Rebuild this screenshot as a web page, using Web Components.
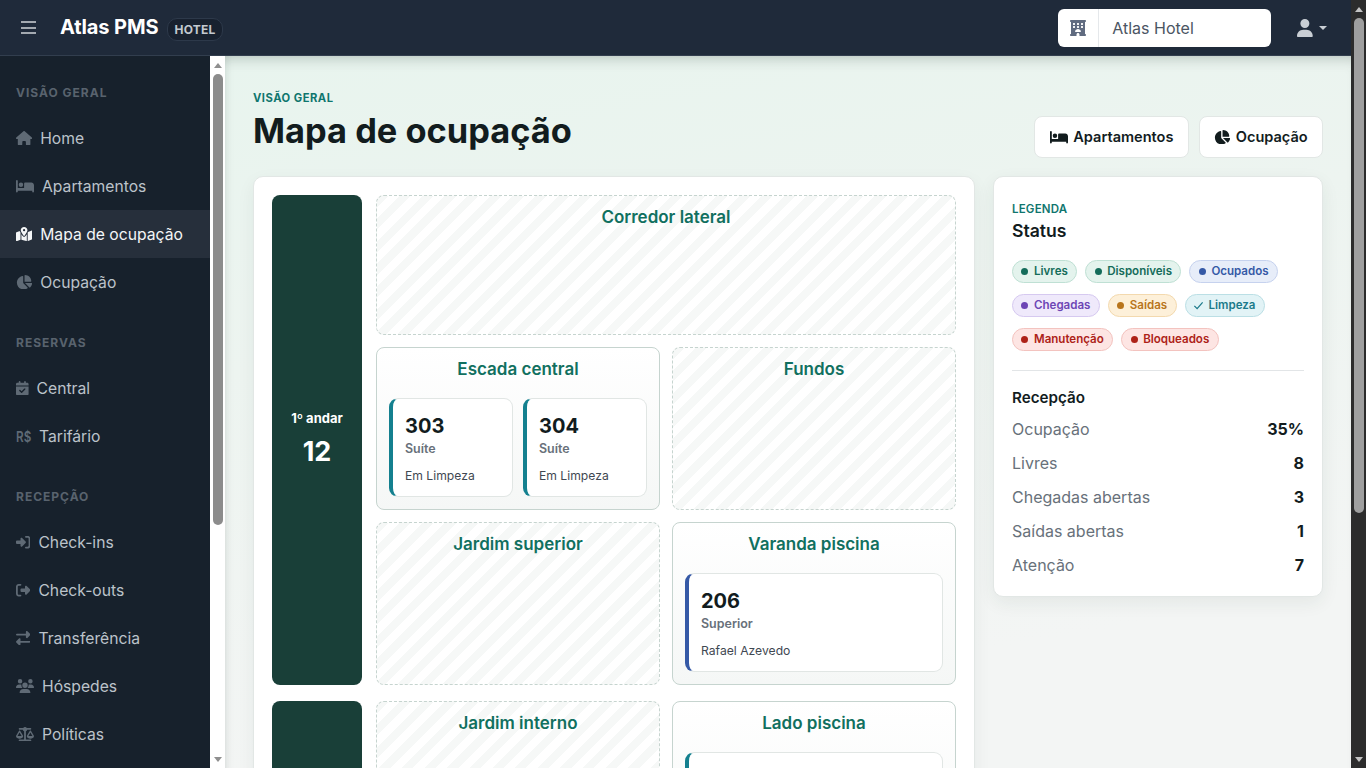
<!DOCTYPE html>
<html lang="pt-BR">
<head>
<meta charset="utf-8">
<title>Mapa de ocupação</title>
<style>
  html, body { margin: 0; height: 100%; overflow: hidden; }
  body { display: flex; font-family: Inter, "Liberation Sans", sans-serif; background: #f3f5f4; color: #121c1e; }
</style>
</head>
<body>
<atlas-app></atlas-app>
<fake-scrollbar theme="dark" thumb="495"></fake-scrollbar>

<template id="tpl-app">
  <style>
    :host { display: flex; flex-direction: column; flex: 1; min-width: 0; height: 768px; overflow: hidden; }
    .below { display: flex; flex: 1; min-height: 0; }
    main { flex: 1; min-width: 0; overflow: hidden; padding: 34px 28px 0;
      background: linear-gradient(170deg, #e8f4ee 0%, #edf4f0 35%, #f3f5f4 80%);
      box-shadow: inset 0 12px 14px -10px rgba(40,60,55,.28), inset 10px 0 10px -10px rgba(40,60,55,.14); }
    .columns { display: flex; gap: 18px; align-items: flex-start; margin-top: 18px; }
    .map-card { flex: 1; min-width: 0; padding: 18px; background: #fff; border: 1px solid #e2e7e5; border-radius: 10px; box-shadow: 0 6px 18px rgba(30,50,45,.06); }
  </style>
  <atlas-topbar></atlas-topbar>
  <div class="below">
    <atlas-sidebar></atlas-sidebar>
    <fake-scrollbar thumb="451"></fake-scrollbar>
    <main>
      <page-header></page-header>
      <div class="columns">
        <div class="map-card">
          <floor-block label="1º andar" count="12">
            <zone-box wide empty name="Corredor lateral"></zone-box>
            <zone-box name="Escada central">
              <room-card number="303" kind="Suíte" note="Em Limpeza" tone="#14808f"></room-card>
              <room-card number="304" kind="Suíte" note="Em Limpeza" tone="#14808f"></room-card>
            </zone-box>
            <zone-box empty name="Fundos"></zone-box>
            <zone-box empty name="Jardim superior"></zone-box>
            <zone-box name="Varanda piscina">
              <room-card number="206" kind="Superior" note="Rafael Azevedo" tone="#3559a6"></room-card>
            </zone-box>
          </floor-block>
          <floor-block>
            <zone-box empty name="Jardim interno"></zone-box>
            <zone-box name="Lado piscina">
              <room-card tone="#14808f"></room-card>
            </zone-box>
          </floor-block>
        </div>
        <legend-panel></legend-panel>
      </div>
    </main>
  </div>
</template>

<script>
const ICONS = {
  home: [576, 'M575.8 255.5c0 18-15 32.1-32 32.1h-32l.7 160.2c0 2.7-.2 5.4-.5 8.1V472c0 22.1-17.9 40-40 40H456c-1.1 0-2.2 0-3.3-.1c-1.4 .1-2.8 .1-4.2 .1H416 392c-22.1 0-40-17.9-40-40V448 384c0-17.7-14.3-32-32-32H256c-17.7 0-32 14.3-32 32v64 24c0 22.1-17.9 40-40 40H160 128.1c-1.5 0-3-.1-4.5-.2c-1.2 .1-2.4 .2-3.6 .2H104c-22.1 0-40-17.9-40-40V360c0-.9 0-1.9 .1-2.8V287.6H32c-18 0-32-14-32-32.1c0-9 3-17 10-24L266.4 8c7-7 15-8 22-8s15 2 21 7L564.8 231.5c8 7 12 15 11 24z'],
  bed: [640, 'M32 32c17.7 0 32 14.3 32 32V320H288V160c0-17.7 14.3-32 32-32H544c53 0 96 43 96 96V448c0 17.7-14.3 32-32 32s-32-14.3-32-32V416H352 320 64v32c0 17.7-14.3 32-32 32s-32-14.3-32-32V64C0 46.3 14.3 32 32 32zm144 96a80 80 0 1 1 0 160 80 80 0 1 1 0-160z'],
  pie: [576, 'M304 240V16.6c0-9 7-16.6 16-16.6C443.7 0 544 100.3 544 224c0 9-7.6 16-16.6 16H304zM32 272C32 150.7 122.1 50.3 239 34.3c9.2-1.3 17 6.1 17 15.4V288L412.5 444.5c6.7 6.7 6.2 17.7-1.5 23.1C371.8 495.6 323.8 512 272 512C139.5 512 32 404.6 32 272zm526.4 16c9.3 0 16.6 7.8 15.4 17c-7.7 55.9-34.6 105.6-73.9 142.3c-6 5.6-15.4 5.2-21.2-.7L320 288H558.4z'],
  map: [576, 'M408 120c0 54.6-73.1 151.9-105.2 192c-7.7 9.6-22 9.6-29.6 0C241.1 271.9 168 174.6 168 120C168 53.7 221.7 0 288 0s120 53.7 120 120zm8 80.4c3.5-6.9 6.7-13.8 9.6-20.6c.5-1.2 1-2.5 1.5-3.7l116-46.4C558.9 123.4 576 135 576 152V422.8c0 9.8-6 18.6-15.1 22.3L416 503V200.4zM137.6 138.3c2.4 14.1 7.2 28.3 12.8 41.5c2.9 6.8 6.1 13.7 9.6 20.6V451.8L32.9 502.7C17.1 509 0 497.4 0 480.4V209.6c0-9.8 6-18.6 15.1-22.3l122.6-49zM327.8 332c13.9-17.4 35.7-45.7 56.2-77V504.3L192 449.4V255c20.5 31.3 42.3 59.6 56.2 77c20.5 25.6 59.1 25.6 79.6 0zM288 152a40 40 0 1 0 0-80 40 40 0 1 0 0 80z'],
  calendar: [448, 'M128 0c17.7 0 32 14.3 32 32V64H288V32c0-17.7 14.3-32 32-32s32 14.3 32 32V64h48c26.5 0 48 21.5 48 48v48H0V112C0 85.5 21.5 64 48 64H96V32c0-17.7 14.3-32 32-32zM0 192H448V464c0 26.5-21.5 48-48 48H48c-26.5 0-48-21.5-48-48V192zM329 305c9.4-9.4 9.4-24.6 0-33.9s-24.6-9.4-33.9 0l-95 95-47-47c-9.4-9.4-24.6-9.4-33.9 0s-9.4 24.6 0 33.9l64 64c9.4 9.4 24.6 9.4 33.9 0L329 305z'],
  signin: [512, 'M217.9 105.9L340.7 228.7c7.2 7.2 11.3 17.1 11.3 27.3s-4.1 20.1-11.3 27.3L217.9 406.1c-6.4 6.4-15 9.9-24 9.9c-18.7 0-33.9-15.2-33.9-33.9l0-62.1L32 320c-17.7 0-32-14.3-32-32l0-64c0-17.7 14.3-32 32-32l128 0 0-62.1c0-18.7 15.2-33.9 33.9-33.9c9 0 17.6 3.6 24 9.9zM352 416l64 0c17.7 0 32-14.3 32-32l0-256c0-17.7-14.3-32-32-32l-64 0c-17.7 0-32-14.3-32-32s14.3-32 32-32l64 0c53 0 96 43 96 96l0 256c0 53-43 96-96 96l-64 0c-17.7 0-32-14.3-32-32s14.3-32 32-32z'],
  signout: [512, 'M377.9 105.9L500.7 228.7c7.2 7.2 11.3 17.1 11.3 27.3s-4.1 20.1-11.3 27.3L377.9 406.1c-6.4 6.4-15 9.9-24 9.9c-18.7 0-33.9-15.2-33.9-33.9l0-62.1-128 0c-17.7 0-32-14.3-32-32l0-64c0-17.7 14.3-32 32-32l128 0 0-62.1c0-18.7 15.2-33.9 33.9-33.9c9 0 17.6 3.6 24 9.9zM160 96L96 96c-17.7 0-32 14.3-32 32l0 256c0 17.7 14.3 32 32 32l64 0c17.7 0 32 14.3 32 32s-14.3 32-32 32l-64 0c-53 0-96-43-96-96L0 128C0 75 43 32 96 32l64 0c17.7 0 32 14.3 32 32s-14.3 32-32 32z'],
  exchange: [512, 'M32 96l320 0V32c0-12.9 7.8-24.6 19.8-29.6s25.7-2.2 34.9 6.9l96 96c6 6 9.4 14.1 9.4 22.6s-3.4 16.6-9.4 22.6l-96 96c-9.2 9.2-22.9 11.9-34.9 6.9s-19.8-16.6-19.8-29.6V160L32 160c-17.7 0-32-14.3-32-32s14.3-32 32-32zM480 352c17.7 0 32 14.3 32 32s-14.3 32-32 32H160v64c0 12.9-7.8 24.6-19.8 29.6s-25.7 2.2-34.9-6.9l-96-96c-6-6-9.4-14.1-9.4-22.6s3.4-16.6 9.4-22.6l96-96c9.2-9.2 22.9-11.9 34.9-6.9s19.8 16.6 19.8 29.6l0 64H480z'],
  users: [640, 'M144 0a80 80 0 1 1 0 160A80 80 0 1 1 144 0zM512 0a80 80 0 1 1 0 160A80 80 0 1 1 512 0zM0 298.7C0 239.8 47.8 192 106.7 192h42.7c15.9 0 31 3.5 44.6 9.7c-1.3 7.2-1.9 14.7-1.9 22.3c0 38.2 16.8 72.5 43.3 96c-.2 0-.4 0-.7 0H21.3C9.6 320 0 310.4 0 298.7zM405.3 320c-.2 0-.4 0-.7 0c26.6-23.5 43.3-57.8 43.3-96c0-7.6-.7-15-1.9-22.3c13.6-6.3 28.7-9.7 44.6-9.7h42.7C592.2 192 640 239.8 640 298.7c0 11.8-9.6 21.3-21.3 21.3H405.3zM224 224a96 96 0 1 1 192 0 96 96 0 1 1 -192 0zM128 485.3C128 411.7 187.7 352 261.3 352H378.7C452.3 352 512 411.7 512 485.3c0 14.7-11.9 26.7-26.7 26.7H154.7c-14.7 0-26.7-11.9-26.7-26.7z'],
  scale: [640, 'M384 32H512c17.7 0 32 14.3 32 32s-14.3 32-32 32H398.4c-5.2 25.8-22.9 47.1-46.4 57.3V448H512c17.7 0 32 14.3 32 32s-14.3 32-32 32H320 128c-17.7 0-32-14.3-32-32s14.3-32 32-32H288V153.3c-23.5-10.3-41.2-31.6-46.4-57.3H128c-17.7 0-32-14.3-32-32s14.3-32 32-32H256c14.6-19.4 37.8-32 64-32s49.4 12.6 64 32zm55.6 288H584.4L512 195.8 439.6 320zM512 416c-62.9 0-115.2-34-126-78.9c-2.6-11 1-22.3 6.7-32.1l95.2-163.2c5-8.6 14.2-13.8 24.1-13.8s19.1 5.3 24.1 13.8l95.2 163.2c5.7 9.8 9.3 21.1 6.7 32.1C627.2 382 574.9 416 512 416zM126.8 195.8L54.4 320H199.3L126.8 195.8zM.9 337.1c-2.6-11 1-22.3 6.7-32.1l95.2-163.2c5-8.6 14.2-13.8 24.1-13.8s19.1 5.3 24.1 13.8l95.2 163.2c5.7 9.8 9.3 21.1 6.7 32.1C242 382 189.7 416 126.8 416S11.7 382 .9 337.1z'],
  hotel: [512, 'M0 32C0 14.3 14.3 0 32 0H480c17.7 0 32 14.3 32 32s-14.3 32-32 32V448c17.7 0 32 14.3 32 32s-14.3 32-32 32H304V464c0-26.5-21.5-48-48-48s-48 21.5-48 48v48H32c-17.7 0-32-14.3-32-32s14.3-32 32-32V64C14.3 64 0 49.7 0 32zm96 80v32c0 8.8 7.2 16 16 16h32c8.8 0 16-7.2 16-16V112c0-8.8-7.2-16-16-16H112c-8.8 0-16 7.2-16 16zM240 96c-8.8 0-16 7.2-16 16v32c0 8.8 7.2 16 16 16h32c8.8 0 16-7.2 16-16V112c0-8.8-7.2-16-16-16H240zm112 16v32c0 8.8 7.2 16 16 16h32c8.8 0 16-7.2 16-16V112c0-8.8-7.2-16-16-16H368c-8.8 0-16 7.2-16 16zM112 192c-8.8 0-16 7.2-16 16v32c0 8.8 7.2 16 16 16h32c8.8 0 16-7.2 16-16V208c0-8.8-7.2-16-16-16H112zm112 16v32c0 8.8 7.2 16 16 16h32c8.8 0 16-7.2 16-16V208c0-8.8-7.2-16-16-16H240c-8.8 0-16 7.2-16 16zm144-16c-8.8 0-16 7.2-16 16v32c0 8.8 7.2 16 16 16h32c8.8 0 16-7.2 16-16V208c0-8.8-7.2-16-16-16H368zM328 384c13.3 0 24.3-10.9 21-23.8c-10.6-41.5-48.2-72.2-93-72.2s-82.5 30.7-93 72.2c-3.3 12.8 7.8 23.8 21 23.8H328z'],
  user: [448, 'M224 256A128 128 0 1 0 224 0a128 128 0 1 0 0 256zm-45.7 48C79.8 304 0 383.8 0 482.3C0 498.7 13.3 512 29.7 512H418.3c16.4 0 29.7-13.3 29.7-29.7C448 383.8 368.2 304 269.7 304H178.3z'],
};

// same inline svg everywhere, width follows the glyph ratio
function iconSvg(name, size) {
  const [w, d] = ICONS[name];
  return `<svg width="${w / 512 * size}" height="${size}" viewBox="0 0 ${w} 512" fill="currentColor" style="display:block;flex:none"><path d="${d}"/></svg>`;
}

class AtlasApp extends HTMLElement {
  constructor() {
    super();
    this.attachShadow({ mode: 'open' });
    this.shadowRoot.appendChild(document.getElementById('tpl-app').content.cloneNode(true));
  }
}

class FakeScrollbar extends HTMLElement {
  constructor() {
    super();
    this.attachShadow({ mode: 'open' });
    const dark = this.getAttribute('theme') === 'dark';
    const arrow = dark ? '#c4c4c4' : '#8f8f8f';
    this.shadowRoot.innerHTML = `
    <style>
      :host { display: flex; flex-direction: column; align-items: center; flex: none; width: 15px;
        background: ${dark ? '#2c2c2c' : '#fff'}; }
      .end { flex: none; height: 18px; display: flex; align-items: center; justify-content: center; }
      .up { width: 0; height: 0; border: 4.5px solid transparent; border-top: 0; border-bottom: 5px solid ${arrow}; }
      .down { width: 0; height: 0; border: 4.5px solid transparent; border-bottom: 0; border-top: 5px solid ${arrow}; }
      .thumb { flex: none; width: 10px; border-radius: 5px; background: ${dark ? '#9f9f9f' : '#8c8c8c'}; }
      .rest { flex: 1; }
    </style>
    <div class="end"><span class="up"></span></div>
    <div class="thumb" style="height:${this.getAttribute('thumb')}px"></div>
    <div class="rest"></div>
    <div class="end"><span class="down"></span></div>`;
  }
}

class AtlasTopbar extends HTMLElement {
  constructor() {
    super();
    this.attachShadow({ mode: 'open' });
    this.shadowRoot.innerHTML = `
    <style>
      :host { display: flex; align-items: center; flex: none; height: 55px; border-bottom: 1px solid #323e4e;
        background: #1f2a3a; position: relative; z-index: 2; }
      .burger { display: flex; flex-direction: column; gap: 3.4px; width: 14.6px; margin-left: 21px; }
      .burger i { display: block; height: 2px; background: #a3a9b0; }
      .brand { margin: -1px 0 0 24.4px; font-size: 20px; font-weight: 700; color: #fff; letter-spacing: -.1px; }
      .badge { margin: 3px 0 0 8px; padding: 0 7px; height: 21px; line-height: 21px; font-size: 12px; font-weight: 700;
        letter-spacing: .2px; color: #c3c9d0; background: #18212f; border: 1px solid #2d394a; border-radius: 10px; }
      .grow { flex: 1; }
      .select { display: flex; align-items: stretch; width: 213px; height: 38px; background: #fff; border-radius: 6px; }
      .select .ico { display: flex; align-items: center; justify-content: center; width: 40px; color: #606b80; border-right: 1px solid #e5e8eb; }
      .select .val { display: flex; align-items: center; padding-left: 13px; font-size: 16px; color: #4b5563; }
      .user { display: flex; align-items: center; gap: 6px; margin: 0 24px 0 26px; color: #c9ced4; }
      .caret { width: 0; height: 0; border: 4px solid transparent; border-bottom: 0; border-top: 4px solid #c9ced4; }
    </style>
    <div class="burger"><i></i><i></i><i></i></div>
    <div class="brand">Atlas PMS</div>
    <div class="badge">HOTEL</div>
    <div class="grow"></div>
    <div class="select">
      <div class="ico">${iconSvg('hotel', 16)}</div>
      <div class="val">Atlas Hotel</div>
    </div>
    <div class="user">${iconSvg('user', 18)}<span class="caret"></span></div>`;
  }
}

class NavItem extends HTMLElement {
  constructor() {
    super();
    this.attachShadow({ mode: 'open' });
    const on = this.hasAttribute('active');
    const name = this.getAttribute('icon');
    const ico = name === 'money' ? '<span class="rs">R$</span>' : iconSvg(name, 14.4);
    this.shadowRoot.innerHTML = `
    <style>
      :host { display: flex; align-items: center; gap: 8px; height: 48px; padding-left: 16px; font-size: 15.7px;
        color: ${on ? '#f4f6f7' : '#bcc3ca'}; background: ${on ? '#262f3b' : 'none'}; }
      .i { display: flex; color: ${on ? '#f4f6f7' : '#5f6a75'}; }
      .rs { display: block; width: 15px; font-size: 15px; font-weight: 600; color: #5f6a75; transform: scaleX(.78); transform-origin: 0 50%; }
    </style>
    <span class="i">${ico}</span><slot></slot>`;
  }
}

class NavSection extends HTMLElement {
  constructor() {
    super();
    this.attachShadow({ mode: 'open' });
    this.shadowRoot.innerHTML = `
    <style>
      :host { display: block; padding-top: 26px; }
      .t { height: 20px; line-height: 22px; margin: 0 0 12px 16px; font-size: 12px; font-weight: 700; letter-spacing: 1px; color: #59636e; }
    </style>
    <div class="t">${this.getAttribute('title')}</div>
    <slot></slot>`;
  }
}

class AtlasSidebar extends HTMLElement {
  constructor() {
    super();
    this.attachShadow({ mode: 'open' });
    this.shadowRoot.innerHTML = `
    <style>
      :host { display: block; flex: none; width: 210px; overflow: hidden; background: #17212c; }
    </style>
    <nav-section title="VISÃO GERAL">
      <nav-item icon="home">Home</nav-item>
      <nav-item icon="bed">Apartamentos</nav-item>
      <nav-item icon="map" active>Mapa de ocupação</nav-item>
      <nav-item icon="pie">Ocupação</nav-item>
    </nav-section>
    <nav-section title="RESERVAS">
      <nav-item icon="calendar">Central</nav-item>
      <nav-item icon="money">Tarifário</nav-item>
    </nav-section>
    <nav-section title="RECEPÇÃO">
      <nav-item icon="signin">Check-ins</nav-item>
      <nav-item icon="signout">Check-outs</nav-item>
      <nav-item icon="exchange">Transferência</nav-item>
      <nav-item icon="users">Hóspedes</nav-item>
      <nav-item icon="scale">Políticas</nav-item>
    </nav-section>`;
  }
}

class PageHeader extends HTMLElement {
  constructor() {
    super();
    this.attachShadow({ mode: 'open' });
    this.shadowRoot.innerHTML = `
    <style>
      :host { display: flex; align-items: flex-end; gap: 10px; }
      .titles { flex: 1; padding-bottom: 5px; }
      .eyebrow { font-size: 11.2px; line-height: 16px; font-weight: 700; letter-spacing: .5px; color: #0f766e; }
      h1 { margin: 3px 0 0; font-size: 34.4px; line-height: 44px; font-weight: 700; color: #121c1e; }
      .btn { display: flex; align-items: center; gap: 5.5px; box-sizing: border-box; height: 42px; padding: 0 14.3px; background: #fff; border: 1px solid #e2e7e5;
        border-radius: 8px; font-size: 14.56px; font-weight: 600; color: #121c1e; }
    </style>
    <div class="titles">
      <div class="eyebrow">VISÃO GERAL</div>
      <h1>Mapa de ocupação</h1>
    </div>
    <div class="btn">${iconSvg('bed', 14.4)}Apartamentos</div>
    <div class="btn">${iconSvg('pie', 14.4)}Ocupação</div>`;
  }
}

class FloorBlock extends HTMLElement {
  constructor() {
    super();
    this.attachShadow({ mode: 'open' });
    const label = this.getAttribute('label');
    this.shadowRoot.innerHTML = `
    <style>
      :host { display: flex; gap: 14px; margin-bottom: 16px; }
      .side { flex: none; box-sizing: border-box; width: 90px; padding-bottom: 2px; display: flex; flex-direction: column; align-items: center; justify-content: center; gap: 8px;
        background: #193f38; color: #fff; border-radius: 8px; }
      .side b { font-size: 13px; line-height: 18px; font-weight: 700; }
      .side strong { font-size: 27px; line-height: 34px; font-weight: 700; }
      .zones { flex: 1; min-width: 0; display: grid; grid-template-columns: 1fr 1fr; gap: 12px; }
    </style>
    <div class="side">${label ? `<b>${label}</b><strong>${this.getAttribute('count')}</strong>` : ''}</div>
    <div class="zones"><slot></slot></div>`;
  }
}

class ZoneBox extends HTMLElement {
  constructor() {
    super();
    this.attachShadow({ mode: 'open' });
    const empty = this.hasAttribute('empty');
    const wide = this.hasAttribute('wide');
    this.shadowRoot.innerHTML = `
    <style>
      :host { display: block; box-sizing: border-box; min-height: ${wide ? 140 : 163}px; padding: 11px 12px 12px; border-radius: 8px;
        ${wide ? 'grid-column: 1 / -1;' : ''}
        ${empty
          ? 'border: 1px dashed #c6d4cf; background: repeating-linear-gradient(135deg, #f6f8f7 0 8px, #fff 8px 16px);'
          : 'border: 1px solid #c6d4cf; background: linear-gradient(180deg, #fff 0%, #f5f7f6 100%);'}
      }
      .name { height: 20px; line-height: 20px; text-align: center; font-size: 17px; font-weight: 600; color: #11705f; }
      .rooms { display: flex; gap: 10px; margin-top: 19px; }
      ::slotted(room-card) { flex: 1; min-width: 0; }
    </style>
    <div class="name">${this.getAttribute('name')}</div>
    ${empty ? '' : '<div class="rooms"><slot></slot></div>'}`;
  }
}

class RoomCard extends HTMLElement {
  constructor() {
    super();
    this.attachShadow({ mode: 'open' });
    const number = this.getAttribute('number');
    this.shadowRoot.innerHTML = `
    <style>
      :host { display: block; box-sizing: border-box; height: 99px; padding: 13px 12px 0; background: #fff; border: 1px solid #e1e6e4;
        border-left: 4px solid ${this.getAttribute('tone')}; border-radius: 9px; }
      .no { font-size: 20px; line-height: 28px; font-weight: 700; color: #121c1e; }
      .kind { margin-top: 1px; font-size: 12.48px; line-height: 16px; font-weight: 600; color: #68717a; }
      .note { margin-top: 11px; font-size: 12.16px; line-height: 16px; color: #3f4852; }
    </style>
    ${number ? `<div class="no">${number}</div>
    <div class="kind">${this.getAttribute('kind')}</div>
    <div class="note">${this.getAttribute('note')}</div>` : ''}`;
  }
}

class StatusChip extends HTMLElement {
  constructor() {
    super();
    this.attachShadow({ mode: 'open' });
    const fg = this.getAttribute('fg');
    const mark = this.hasAttribute('check')
      ? `<svg width="11" height="11" viewBox="0 0 16 16" fill="none" stroke="${fg}" stroke-width="1.8" style="margin:0 -1.5px 0 -.5px"><path d="M2 8.5l4 4 8-9"/></svg>`
      : `<i style="width:7px;height:7px;border-radius:50%;background:${fg}"></i>`;
    this.shadowRoot.innerHTML = `
    <style>
      :host { display: inline-flex; align-items: center; gap: 5.6px; box-sizing: border-box; height: 23px; padding: 0 8.4px 1px; border-radius: 12px;
        font-size: 11.55px; font-weight: 600; color: ${fg}; background: ${this.getAttribute('bg')}; border: 1px solid ${this.getAttribute('line')}; }
    </style>
    ${mark}<slot></slot>`;
  }
}

class StatRow extends HTMLElement {
  constructor() {
    super();
    this.attachShadow({ mode: 'open' });
    this.shadowRoot.innerHTML = `
    <style>
      :host { display: flex; justify-content: space-between; height: 34px; line-height: 34px; font-size: 16px; color: #68717a; }
      b { font-weight: 700; color: #121c1e; }
    </style>
    <span><slot></slot></span><b>${this.getAttribute('value')}</b>`;
  }
}

class LegendPanel extends HTMLElement {
  constructor() {
    super();
    this.attachShadow({ mode: 'open' });
    this.shadowRoot.innerHTML = `
    <style>
      :host { display: block; flex: none; box-sizing: border-box; width: 330px; padding: 24px 18px 14px; background: #fff;
        border: 1px solid #e2e7e5; border-radius: 10px; box-shadow: 0 6px 18px rgba(30,50,45,.07); }
      .eyebrow { font-size: 11.5px; line-height: 16px; font-weight: 600; letter-spacing: .2px; color: #0f766e; }
      h2 { margin: 1px 0 0; font-size: 17.6px; line-height: 26px; font-weight: 600; color: #121c1e; }
      .chips { display: flex; flex-wrap: wrap; gap: 11px 8px; margin-top: 16px; }
      hr { margin: 19px 0 16px; border: 0; border-top: 1px solid #e2e5e7; }
      h3 { margin: 0 0 3px; font-size: 15.2px; line-height: 22px; font-weight: 600; color: #121c1e; }
    </style>
    <div class="eyebrow">LEGENDA</div>
    <h2>Status</h2>
    <div class="chips">
      <status-chip fg="#146c5a" bg="#e4f3ed" line="#bfe0d4">Livres</status-chip>
      <status-chip fg="#146c5a" bg="#e4f3ed" line="#bfe0d4">Disponíveis</status-chip>
      <status-chip fg="#3559a6" bg="#e7edf9" line="#c6d2ee">Ocupados</status-chip>
      <status-chip fg="#6d45b5" bg="#efe9fb" line="#d6c9f0">Chegadas</status-chip>
      <status-chip fg="#b8751c" bg="#fdf0d9" line="#f3d9ae">Saídas</status-chip>
      <status-chip check fg="#1b7a8a" bg="#e2f3f6" line="#bbdfe5">Limpeza</status-chip>
      <status-chip fg="#ad2218" bg="#fde5e3" line="#f3c3bf">Manutenção</status-chip>
      <status-chip fg="#ad2218" bg="#fde5e3" line="#f3c3bf">Bloqueados</status-chip>
    </div>
    <hr>
    <h3>Recepção</h3>
    <stat-row value="35%">Ocupação</stat-row>
    <stat-row value="8">Livres</stat-row>
    <stat-row value="3">Chegadas abertas</stat-row>
    <stat-row value="1">Saídas abertas</stat-row>
    <stat-row value="7">Atenção</stat-row>`;
  }
}

customElements.define('fake-scrollbar', FakeScrollbar);
customElements.define('atlas-topbar', AtlasTopbar);
customElements.define('nav-item', NavItem);
customElements.define('nav-section', NavSection);
customElements.define('atlas-sidebar', AtlasSidebar);
customElements.define('page-header', PageHeader);
customElements.define('floor-block', FloorBlock);
customElements.define('zone-box', ZoneBox);
customElements.define('room-card', RoomCard);
customElements.define('status-chip', StatusChip);
customElements.define('stat-row', StatRow);
customElements.define('legend-panel', LegendPanel);
customElements.define('atlas-app', AtlasApp);
</script>
</body>
</html>
